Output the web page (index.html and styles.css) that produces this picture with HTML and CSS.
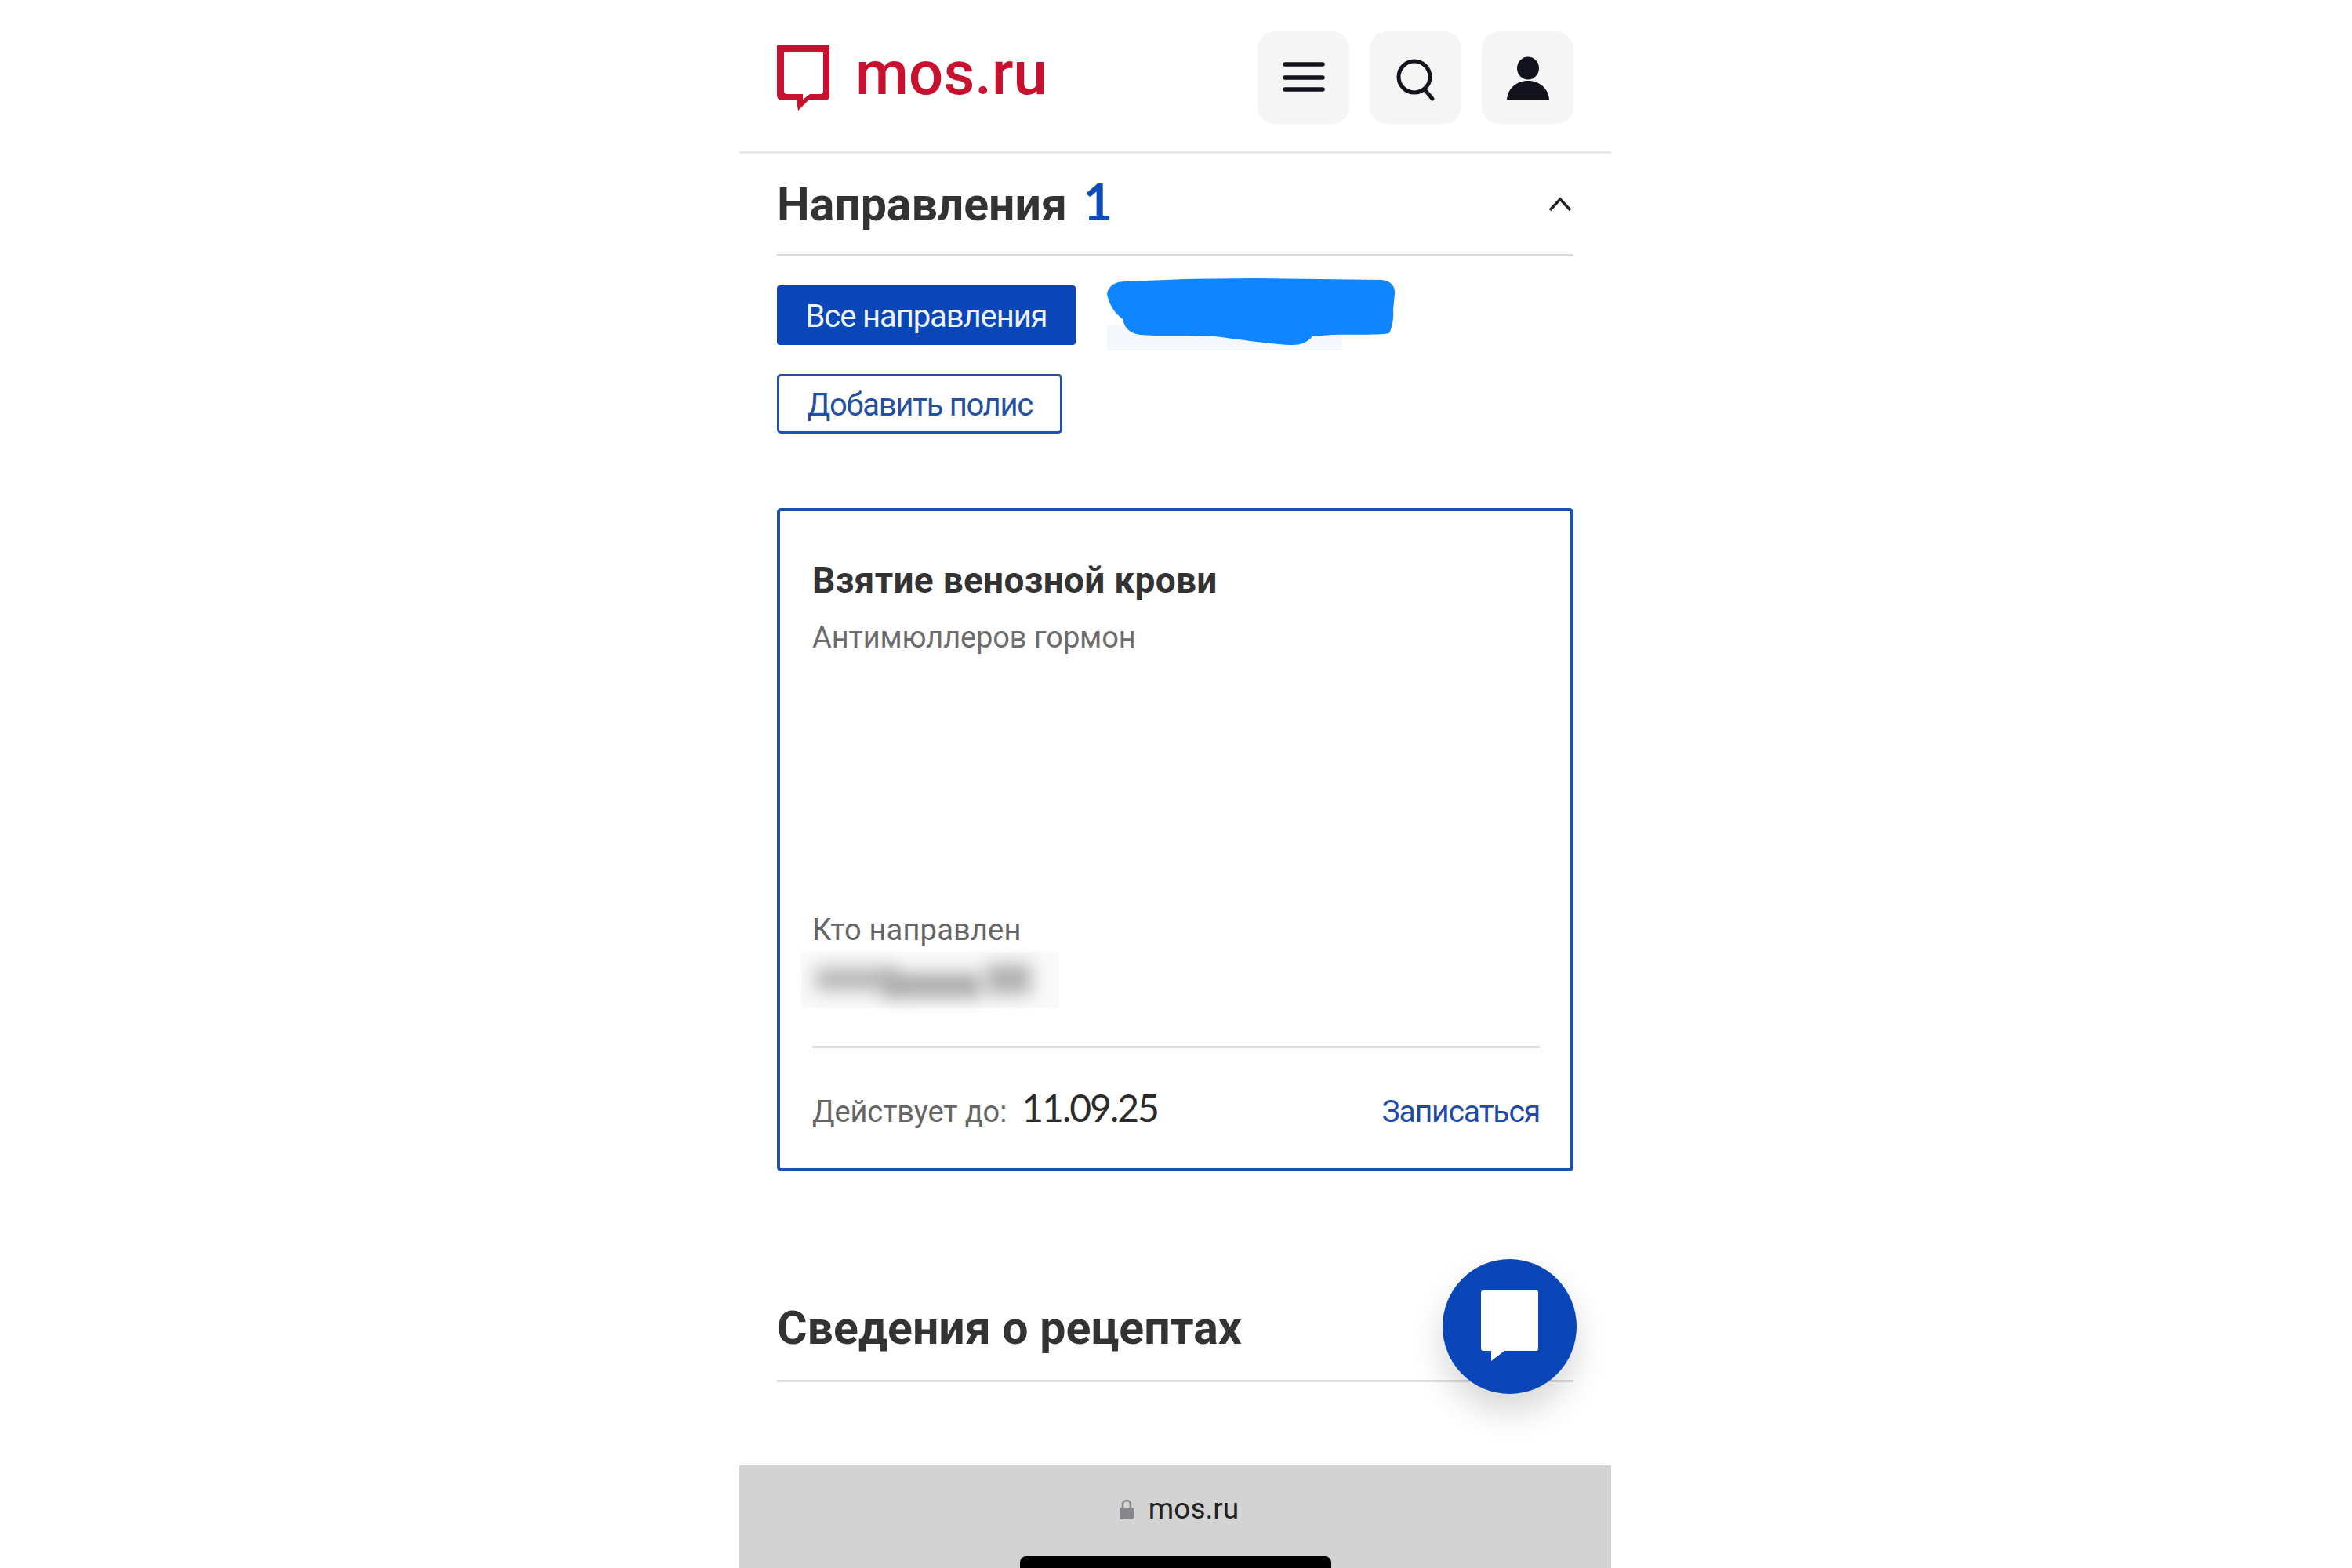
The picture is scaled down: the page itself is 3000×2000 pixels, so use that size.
FILE: index.html
```html
<!DOCTYPE html>
<html lang="ru">
<head>
  <meta charset="UTF-8">
  <title>mos.ru</title>
  <link rel="stylesheet" href="styles.css">
</head>
<body>
  <div class="phone">
    <header class="topBar">
      <a class="logo">
        <svg class="logoMark" width="68" height="86" viewBox="0 0 68 86"><path fill-rule="evenodd" fill="#c8102f" d="M0 2H67V66Q67 72 61 72H40L27 85L25 72H7Q0 72 0 65ZM9 10V60Q9 64 13 64H33L33 71L42 64H55Q59 64 59 60V10Z"/></svg>
        <span class="logoText">mos.ru</span>
      </a>
      <div class="topBtns">
        <div class="iconBtn"><svg width="117" height="118" viewBox="0 0 117 118"><path d="M35 42H83M35 59H83M35 74H83" stroke="#12131c" stroke-width="5.5" stroke-linecap="round" fill="none"/></svg></div>
        <div class="iconBtn"><svg width="117" height="118" viewBox="0 0 117 118"><circle cx="57" cy="58" r="20" stroke="#12131c" stroke-width="5" fill="none"/><path d="M70 74L80 86" stroke="#12131c" stroke-width="5" stroke-linecap="round"/></svg></div>
        <div class="iconBtn"><svg width="117" height="118" viewBox="0 0 117 118"><ellipse cx="59" cy="47" rx="14" ry="14.5" fill="#12131c"/><path d="M32 87C33 73 44 63 59 63C74 63 85 73 86 87Z" fill="#12131c"/></svg></div>
      </div>
    </header>

    <div class="content">
      <div class="sectionHead">
        <h2 class="sectionTitle">Направления <span class="count">1</span></h2>
        <svg width="32" height="22" viewBox="0 0 32 22"><path d="M3 19L16 5L29 19" stroke="#222" stroke-width="3.5" fill="none"/></svg>
      </div>

      <div class="chips">
        <button class="btnMain">Все направления</button>
        <svg class="scribble" width="370" height="92" viewBox="0 0 370 92"><rect x="0" y="60" width="300" height="32" fill="#f4f8fd"/><path fill="#0f85ff" d="M0 20C2 8 12 4 24 4L100 1L190 0L350 2C362 3 368 10 367 20L365 40C366 50 364 62 360 70C345 73 305 71 287 72L262 74C256 82 246 85 237 85C215 85 170 78 137 74C105 72 65 74 42 72C28 70 22 62 20 52C12 46 3 36 0 20Z"/></svg>
      </div>
      <button class="btnOutline">Добавить полис</button>

      <div class="card">
        <h3 class="cardTitle">Взятие венозной крови</h3>
        <div class="cardSub">Антимюллеров гормон</div>
        <div class="cardLabel">Кто направлен</div>
        <div class="blurName"><span class="blurBit b1"></span><span class="blurBit b2"></span><span class="blurBit b3"></span></div>
        <div class="cardLine"></div>
        <div class="cardFoot">
          <span class="validTo">Действует до:</span>
          <span class="validDate">11.09.25</span>
          <a class="signUp">Записаться</a>
        </div>
      </div>

      <h2 class="recipes">Сведения о рецептах</h2>
    </div>

    <div class="chatFab">
      <svg width="74" height="92" viewBox="0 0 74 92"><path fill="#fff" d="M3 0H71Q73 0 73 3V74Q73 77 70 77H30L13 90V77H3Q0 77 0 74V3Q0 0 3 0Z"/></svg>
    </div>

    <footer class="browserBar">
      <div class="urlRow">
        <svg width="20" height="26" viewBox="0 0 20 26"><path d="M5 12V7a5 5 0 0 1 10 0v5" stroke="#86868c" stroke-width="2.5" fill="none"/><rect x="1" y="11" width="18" height="15" rx="2" fill="#86868c"/></svg>
        <span class="url">mos.ru</span>
      </div>
      <div class="homeBar"></div>
    </footer>
  </div>
</body>
</html>
```

FILE: styles.css
```css
* { box-sizing: border-box; }
body { margin: 0; background: #fff; font-family: Roboto, "Noto Sans", sans-serif; color: #333; }
h2, h3 { margin: 0; }

.phone { position: relative; width: 1112px; height: 2000px; margin: 0 0 0 943px; display: flex; flex-direction: column; overflow: hidden; }

.topBar { height: 196px; padding: 40px 48px 0 48px; display: flex; justify-content: space-between; align-items: flex-start; border-bottom: 3px solid #e8e8e8; }
.logo { display: flex; align-items: flex-start; gap: 32px; padding-top: 16px; }
.logoText { font-size: 78px; line-height: 76px; font-weight: 500; color: #c8102f; }
.topBtns { display: flex; gap: 26px; }
.iconBtn { width: 117px; height: 118px; border-radius: 22px; background: #f5f5f6; }
.iconBtn svg { display: block; }

.content { padding: 0 48px; }
.sectionHead { height: 131px; padding-right: 1px; display: flex; justify-content: space-between; align-items: center; border-bottom: 3px solid #dcdcdc; }
.sectionTitle { margin-bottom: 4px; font-size: 59px; line-height: 70px; font-weight: 700; color: #333; }
.count { font-family: Lato, Roboto, sans-serif; font-size: 65px; color: #0f4cb8; margin-left: 6px; }

.chips { display: flex; gap: 40px; margin-top: 37px; height: 76px; }
.btnMain { width: 381px; height: 76px; padding-top: 3px; border: none; border-radius: 4px; background: #0b46b8; color: #eef3fb; font: 400 40px Roboto, sans-serif; letter-spacing: -1.1px; }
.scribble { margin-top: -9px; }
.btnOutline { display: block; width: 364px; height: 76px; padding-top: 3px; margin-top: 37px; border: 3px solid #2250b0; border-radius: 5px; background: #fff; color: #24509f; font: 400 40px Roboto, sans-serif; letter-spacing: -1.35px; }

.card { height: 846px; margin-top: 95px; padding: 62px 39px 0 41px; border: 4px solid #1a50ae; border-radius: 5px; background: #fff; }
.cardTitle { font-size: 46px; line-height: 52px; font-weight: 700; letter-spacing: .3px; color: #333; }
.cardSub { margin-top: 24px; font-size: 38px; line-height: 46px; letter-spacing: -.1px; color: #6c6c6c; }
.cardLabel { margin-top: 327px; font-size: 38px; line-height: 46px; letter-spacing: .2px; color: #666; }
.blurName { position: relative; height: 72px; width: 329px; margin: 5px 0 0 -14px; background: #f9f9f9; }
.blurBit { position: absolute; background: #a8a8a8; filter: blur(11px); }
.b1 { left: 18px; top: 20px; width: 105px; height: 30px; background: #b8b8b8; }
.b2 { left: 105px; top: 28px; width: 125px; height: 30px; }
.b3 { left: 235px; top: 16px; width: 58px; height: 38px; background: #b0b0b0; }
.cardLine { height: 3px; margin-top: 48px; background: #dedede; }
.cardFoot { display: flex; align-items: baseline; margin-top: 53px; }
.validTo { font-size: 38px; line-height: 46px; letter-spacing: -.1px; color: #666; }
.validDate { margin-left: 19px; font-family: Lato, Roboto, sans-serif; font-size: 48px; line-height: 46px; letter-spacing: -2px; color: #2b2b2b; }
.signUp { margin-left: auto; font-size: 39px; line-height: 46px; letter-spacing: -1.1px; color: #1f4aa8; }

.recipes { margin-top: 161px; padding-bottom: 27px; font-size: 59px; line-height: 78px; font-weight: 700; color: #333; border-bottom: 3px solid #dcdcdc; }

.chatFab { position: absolute; top: 1606px; right: 44px; width: 171px; height: 172px; border-radius: 50%; background: #0b46b8; box-shadow: 0 22px 44px rgba(0, 0, 0, .16); display: flex; justify-content: center; padding-top: 40px; }
.chatFab svg { display: block; }

.browserBar { margin-top: auto; height: 131px; background: #d3d3d3; display: flex; flex-direction: column; align-items: center; justify-content: space-between; }
.urlRow { display: flex; align-items: center; gap: 18px; margin: 41px 0 0 9px; }
.url { font-size: 37px; line-height: 30px; color: #222; }
.homeBar { width: 397px; height: 15px; border-radius: 8px 8px 0 0; background: #000; }
```
